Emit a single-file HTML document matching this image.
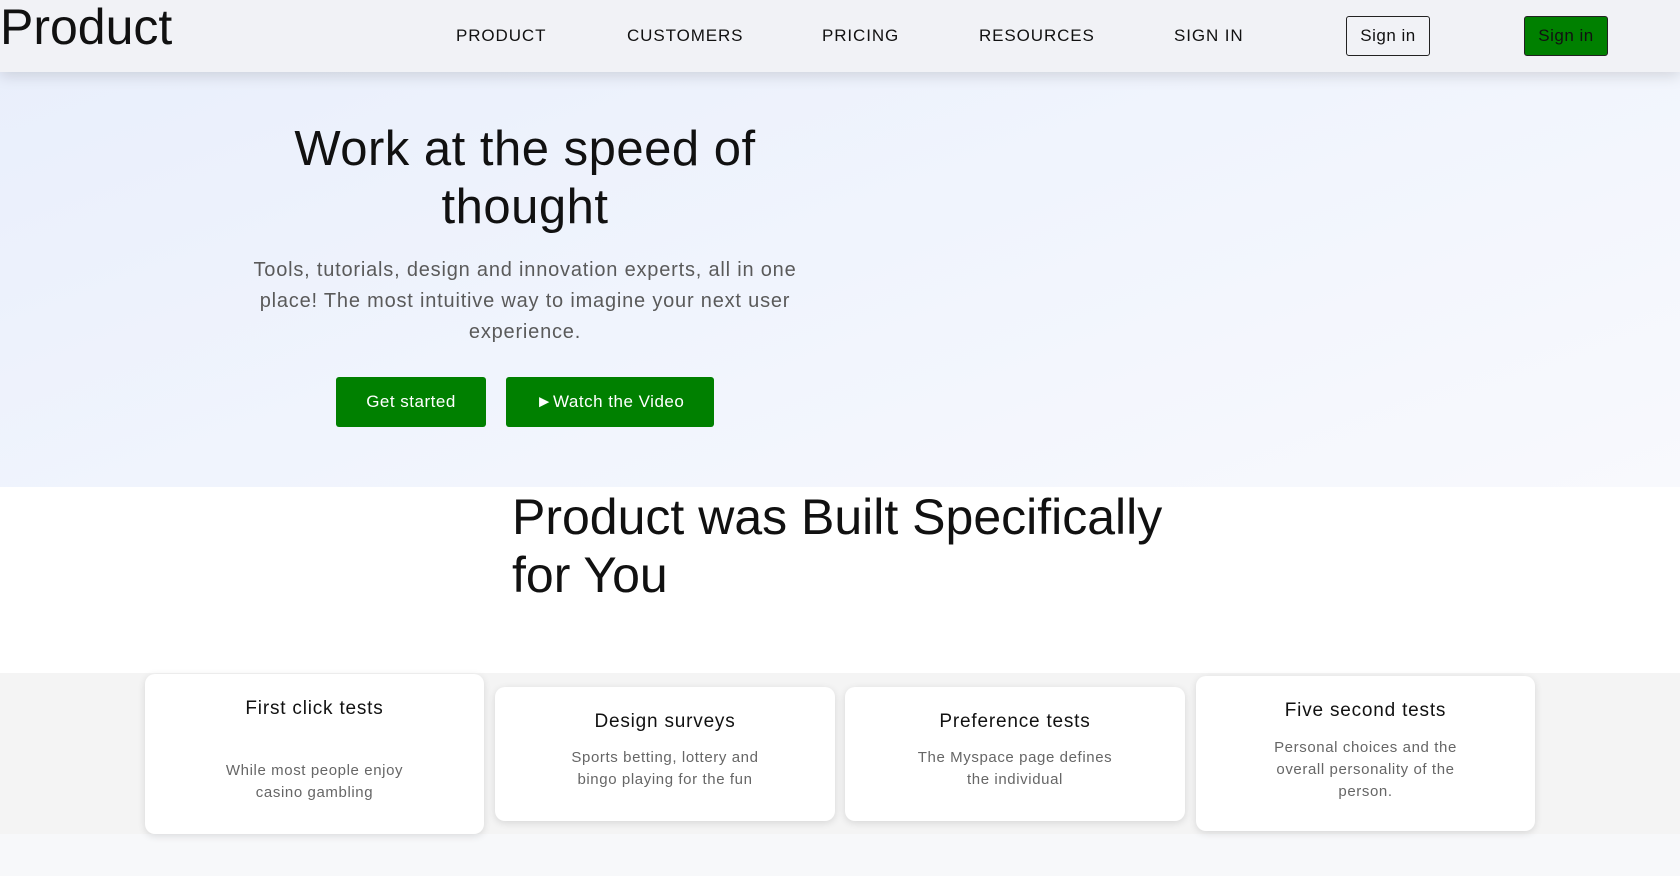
<!DOCTYPE html>
<html><head><meta charset="utf-8"><style>
*{margin:0;padding:0;box-sizing:border-box}
body{width:1680px;height:876px;overflow:hidden;font-family:"Liberation Sans",sans-serif;background:#f7f8fa;position:relative;color:#111}
.abs{position:absolute}
.hero{left:0;top:0;width:1680px;height:487px;background:linear-gradient(160deg,#e8eefb 0%,#f0f4fd 50%,#f8f9fd 100%)}
.nav{left:0;top:0;width:1680px;height:72px;background:#f1f2f6;box-shadow:0 4px 14px rgba(0,0,0,.13);z-index:2}
.logo{left:0;top:-2px;font-size:50px;color:#111}
.ni{top:26px;font-size:17px;letter-spacing:.9px;color:#111}
.btn{border-radius:3px;font-size:17px;letter-spacing:.5px;display:flex;align-items:center;justify-content:center}
h1{font-weight:normal}
.card{background:#fff;border-radius:10px;box-shadow:0 2px 8px rgba(0,0,0,.12);text-align:center}
.ct{font-size:19px;letter-spacing:.8px;color:#111;position:absolute;left:0;right:0}
.cd{font-size:15px;letter-spacing:.6px;line-height:22px;color:#666;position:absolute;left:0;right:0}
</style></head><body>
<div class="abs hero"></div>
<div class="abs nav">
<div class="abs logo">Product</div>
<div class="abs ni" style="left:456px">PRODUCT</div>
<div class="abs ni" style="left:627px">CUSTOMERS</div>
<div class="abs ni" style="left:822px">PRICING</div>
<div class="abs ni" style="left:979px">RESOURCES</div>
<div class="abs ni" style="left:1174px">SIGN IN</div>
<div class="abs btn" style="left:1346px;top:16px;width:84px;height:40px;border:1px solid #222;color:#111">Sign in</div>
<div class="abs btn" style="left:1524px;top:16px;width:84px;height:40px;border:1px solid #222;background:#008000;color:#111">Sign in</div>
</div>
<h1 class="abs" style="left:255px;top:120px;width:540px;text-align:center;font-size:49px;line-height:58px;letter-spacing:.5px">Work at the speed of thought</h1>
<p class="abs" style="left:245px;top:255px;width:560px;text-align:center;font-size:20px;line-height:31px;letter-spacing:.8px;color:#5a5a5a">Tools, tutorials, design and innovation experts, all in one place! The most intuitive way to imagine your next user experience.</p>
<div class="abs btn" style="left:336px;top:377px;width:150px;height:50px;background:#008000;color:#fff">Get started</div>
<div class="abs btn" style="left:506px;top:377px;width:208px;height:50px;background:#008000;color:#fff">►Watch the Video</div>
<div class="abs" style="left:0;top:487px;width:1680px;height:186px;background:#fff"></div>
<h1 class="abs" style="left:512px;top:488px;width:700px;font-size:50px;line-height:58px;letter-spacing:0">Product was Built Specifically for You</h1>
<div class="abs" style="left:0;top:673px;width:1680px;height:161px;background:#f4f4f4"></div>
<div class="abs card" style="left:145px;top:674px;width:339px;height:160px"><div class="ct" style="top:24px">First click tests</div><div class="cd" style="top:86px">While most people enjoy<br>casino gambling</div></div>
<div class="abs card" style="left:495px;top:687px;width:340px;height:134px"><div class="ct" style="top:24px">Design surveys</div><div class="cd" style="top:60px">Sports betting, lottery and<br>bingo playing for the fun</div></div>
<div class="abs card" style="left:845px;top:687px;width:340px;height:134px"><div class="ct" style="top:24px">Preference tests</div><div class="cd" style="top:60px">The Myspace page defines<br>the individual</div></div>
<div class="abs card" style="left:1196px;top:676px;width:339px;height:155px"><div class="ct" style="top:24px">Five second tests</div><div class="cd" style="top:61px">Personal choices and the<br>overall personality of the<br>person.</div></div>
</body></html>
